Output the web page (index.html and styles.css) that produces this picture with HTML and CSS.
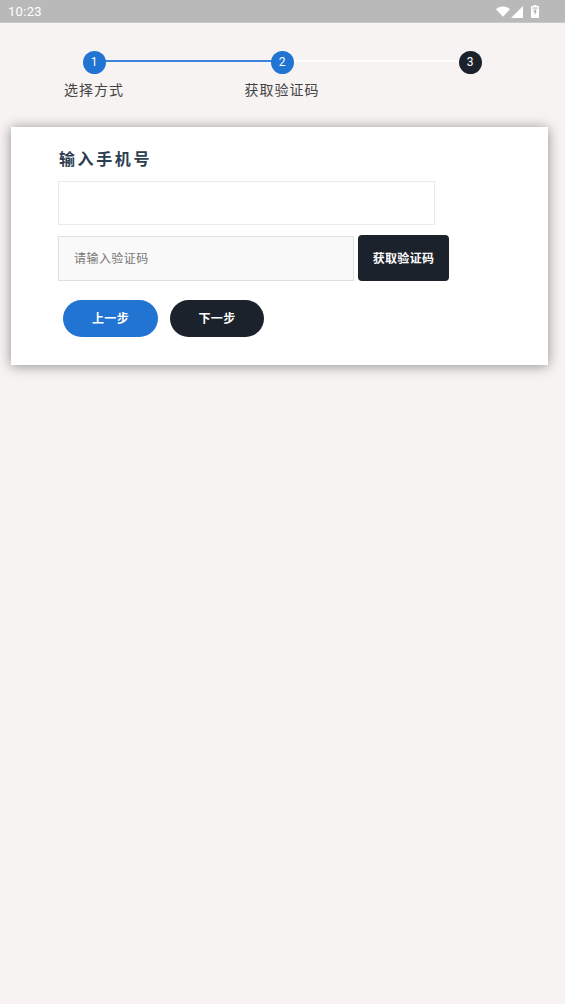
FILE: index.html
```html
<!DOCTYPE html>
<html lang="zh">
<head>
<meta charset="utf-8">
<title>输入手机号</title>
<link rel="stylesheet" href="styles.css">
</head>
<body>
<header class="status-bar">
  <span class="time">10:23</span>
  <div class="status-icons">
    <svg class="wifi" viewBox="0 0 14 11" width="14" height="11"><path d="M0 3.200C1.900 1.300 4.300.4 7 .4s5.100.9 7 2.800L7 10.800z" fill="#fff"/></svg>
    <svg class="signal" viewBox="0 0 12 12" width="12" height="12"><path d="M12 0v12H0z" fill="#fff"/></svg>
    <svg class="battery" viewBox="0 0 8 13" width="8" height="13"><path d="M2.500 0h3v1H7.500a.5.500 0 0 1 .5.500V12.500a.5.500 0 0 1-.5.500H.5a.5.500 0 0 1-.5-.5V1.500A.5.500 0 0 1 .5 1h2z" fill="#fff"/><path d="M1 2h6v2.500H1z" fill="#dcdcdc"/><path d="M4.500 3 2.500 7h1.200v3l2-4H4.500z" fill="#a8a8a8"/></svg>
  </div>
</header>
<section class="steps">
  <div class="step done">
    <span class="dot blue">1</span>
    <span class="step-label">选择方式</span>
  </div>
  <div class="step next-white">
    <span class="dot blue">2</span>
    <span class="step-label">获取验证码</span>
  </div>
  <div class="step last">
    <span class="dot dark">3</span>
  </div>
</section>
<main class="card">
  <h1 class="title">输入手机号</h1>
  <input class="field phone" type="text" aria-label="手机号">
  <div class="code-row">
    <input class="field code" type="text" placeholder="请输入验证码">
    <button class="code-btn" type="button">获取验证码</button>
  </div>
  <div class="actions">
    <button class="pill blue wide" type="button">上一步</button>
    <button class="pill dark" type="button">下一步</button>
  </div>
</main>
</body>
</html>
```
FILE: styles.css
```css
* { box-sizing: border-box; }
html, body { margin: 0; padding: 0; }
body {
  width: 565px;
  height: 1004px;
  overflow: hidden;
  background: #f6f3f2;
  font-family: Roboto, "Noto Sans CJK SC", sans-serif;
}
.status-bar {
  height: 23px;
  background: #b9b9b9;
  border-bottom: 1px solid #c9c9c9;
  color: #fff;
  display: flex;
  align-items: center;
  justify-content: space-between;
  padding: 1px 26px 0 8px;
}
.time { font-size: 13px; letter-spacing: 0.3px; line-height: 22px; }
.status-icons { display: flex; align-items: center; gap: 1px; }
.signal { margin-right: 7px; }
.steps {
  display: grid;
  grid-template-columns: repeat(3, 188px);
  padding-top: 28px;
  height: 104px;
}
.step {
  position: relative;
  display: flex;
  flex-direction: column;
  align-items: center;
}
.step.done::after, .step.next-white::after {
  content: "";
  position: absolute;
  left: 94px;
  width: 188px;
  top: 9px;
  height: 2px;
}
.step.done::after { background: #3c84dc; }
.step.next-white::after { background: #fff; }
.dot {
  position: relative;
  z-index: 1;
  width: 23px;
  height: 23px;
  border-radius: 50%;
  color: #fff;
  font-size: 12px;
  line-height: 23px;
  text-align: center;
}
.dot.blue { background: #2274d3; }
.dot.dark { background: #1c222c; }
.step-label {
  margin-top: 6px;
  font-size: 14px;
  line-height: 20px;
  letter-spacing: 1px;
  color: #444;
  white-space: nowrap;
}
.card {
  margin: 0 17px 0 11px;
  height: 238px;
  background: #fff;
  box-shadow: 0 1px 12px rgba(0, 0, 0, 0.42);
  padding: 21px 0 0 47px;
}
.title {
  margin: 0 0 9px 1px;
  font-size: 16px;
  line-height: 24px;
  font-weight: 700;
  letter-spacing: 2.6px;
  color: #2c3e50;
}
.field {
  display: block;
  background: #fff;
  border: 1px solid #ebebeb;
  border-radius: 0;
  outline: none;
  font-family: inherit;
}
.phone { width: 377px; height: 44px; }
.code-row {
  display: flex;
  align-items: center;
  gap: 4px;
  margin-top: 10px;
}
.code {
  width: 296px;
  height: 45px;
  background: #f9f9f9;
  border-color: #e0e0e0;
  padding: 2px 15px 0;
  font-size: 12px;
}
.code::placeholder { color: #777; opacity: 1; letter-spacing: 0.45px; }
.code-btn {
  width: 91px;
  height: 46px;
  background: #1c222c;
  color: #fff;
  border: 0;
  border-radius: 4px;
  font-family: inherit;
  font-size: 12px;
  font-weight: 700;
  letter-spacing: 0.3px;
  padding: 0 0 1px;
}
.actions {
  display: flex;
  gap: 12px;
  margin: 19px 0 0 5px;
}
.pill {
  width: 94px;
  height: 37px;
  border: 0;
  border-radius: 19px;
  color: #fff;
  font-family: inherit;
  font-size: 12px;
  font-weight: 700;
  letter-spacing: 0.4px;
  padding: 0 0 2px;
}
.pill.wide { width: 95px; }
.pill.blue { background: #2274d3; }
.pill.dark { background: #1c222c; }
```
